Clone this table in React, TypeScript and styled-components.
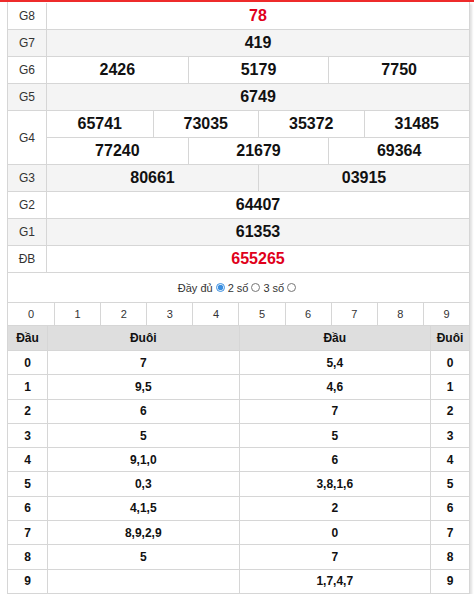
import React from "react";
import styled, { createGlobalStyle } from "styled-components";

const GlobalStyle = createGlobalStyle`
  html, body { margin: 0; padding: 0; background: #fff; }
  body {
    border-top: 2px solid #ee2b2b;
    font-family: Arial, "Liberation Sans", sans-serif;
    color: #222;
  }
`;

const LINE = "#d6d6d6";

const Card = styled.div`
  margin-left: 7px;
  width: 463px;
  box-sizing: border-box;
  padding-top: 1px;
  border-left: 1px solid ${LINE};
  border-right: 1px solid ${LINE};
  box-shadow: 2px 2px 2px rgba(0, 0, 0, 0.12);
  background: #fff;
`;

const PrizeRow = styled.div<{ $alt: boolean }>`
  display: grid;
  grid-template-columns: 39px 1fr;
  background: ${(p) => (p.$alt ? "#f4f4f4" : "#fff")};
  border-bottom: 1px solid ${LINE};
`;

const PrizeLabel = styled.div`
  border-right: 1px solid ${LINE};
  display: flex;
  align-items: center;
  justify-content: center;
  font-size: 12px;
  color: #333;
`;

const ValueStack = styled.div`
  display: flex;
  flex-direction: column;
`;

const ValueLine = styled.div<{ $cols: number }>`
  display: grid;
  grid-template-columns: repeat(${(p) => p.$cols}, 1fr);
  & + & { border-top: 1px solid ${LINE}; }
`;

const ValueCell = styled.div<{ $red?: boolean }>`
  height: 26px;
  display: flex;
  align-items: center;
  justify-content: center;
  font-size: 16px;
  font-weight: bold;
  color: ${(p) => (p.$red ? "#e0001b" : "#111")};
  & + & { border-left: 1px solid ${LINE}; }
`;

const OptionBar = styled.div`
  height: 29px;
  display: flex;
  align-items: center;
  justify-content: center;
  font-size: 11px;
  color: #333;
  border-bottom: 1px solid ${LINE};
`;

const Radio = styled.input`
  width: 9px;
  height: 9px;
  margin: 0 3px 0 3px;
  accent-color: #3b8fe0;
`;

const DigitBar = styled.div`
  display: grid;
  grid-template-columns: repeat(10, 1fr);
  border-bottom: 1px solid ${LINE};
`;

const DigitCell = styled.div`
  height: 22px;
  display: flex;
  align-items: center;
  justify-content: center;
  font-size: 11px;
  color: #333;
  & + & { border-left: 1px solid ${LINE}; }
`;

const LotoRow = styled.div<{ $head?: boolean }>`
  display: grid;
  grid-template-columns: 39px 1fr 1fr 39px;
  height: ${(p) => (p.$head ? "25px" : "24.3px")};
  box-sizing: border-box;
  border-bottom: 1px solid ${LINE};
  background: ${(p) => (p.$head ? "#dedede" : "#fff")};
`;

const LotoCell = styled.div`
  display: flex;
  align-items: center;
  justify-content: center;
  font-size: 12px;
  font-weight: bold;
  color: #111;
  & + & { border-left: 1px solid ${LINE}; }
`;

type Prize = { label: string; lines: string[][]; red?: boolean };

const prizes: Prize[] = [
  { label: "G8", lines: [["78"]], red: true },
  { label: "G7", lines: [["419"]] },
  { label: "G6", lines: [["2426", "5179", "7750"]] },
  { label: "G5", lines: [["6749"]] },
  { label: "G4", lines: [["65741", "73035", "35372", "31485"], ["77240", "21679", "69364"]] },
  { label: "G3", lines: [["80661", "03915"]] },
  { label: "G2", lines: [["64407"]] },
  { label: "G1", lines: [["61353"]] },
  { label: "ĐB", lines: [["655265"]], red: true },
];

const loto: [string, string][] = [
  ["7", "5,4"],
  ["9,5", "4,6"],
  ["6", "7"],
  ["5", "5"],
  ["9,1,0", "6"],
  ["0,3", "3,8,1,6"],
  ["4,1,5", "2"],
  ["8,9,2,9", "0"],
  ["5", "7"],
  ["", "1,7,4,7"],
];

export default function App() {
  return (
    <>
      <GlobalStyle />
      <Card>
        {prizes.map((p, i) => (
          <PrizeRow key={p.label} $alt={i % 2 === 1}>
            <PrizeLabel>{p.label}</PrizeLabel>
            <ValueStack>
              {p.lines.map((line, li) => (
                <ValueLine key={li} $cols={line.length}>
                  {line.map((v) => (
                    <ValueCell key={v} $red={p.red}>{v}</ValueCell>
                  ))}
                </ValueLine>
              ))}
            </ValueStack>
          </PrizeRow>
        ))}
        <OptionBar>
          Đầy đủ<Radio type="radio" name="mode" defaultChecked />2 số
          <Radio type="radio" name="mode" />3 số
          <Radio type="radio" name="mode" />
        </OptionBar>
        <DigitBar>
          {Array.from({ length: 10 }, (_, d) => (
            <DigitCell key={d}>{d}</DigitCell>
          ))}
        </DigitBar>
        <LotoRow $head>
          <LotoCell>Đầu</LotoCell>
          <LotoCell>Đuôi</LotoCell>
          <LotoCell>Đầu</LotoCell>
          <LotoCell>Đuôi</LotoCell>
        </LotoRow>
        {loto.map(([tail, head], d) => (
          <LotoRow key={d}>
            <LotoCell>{d}</LotoCell>
            <LotoCell>{tail}</LotoCell>
            <LotoCell>{head}</LotoCell>
            <LotoCell>{d}</LotoCell>
          </LotoRow>
        ))}
      </Card>
    </>
  );
}
